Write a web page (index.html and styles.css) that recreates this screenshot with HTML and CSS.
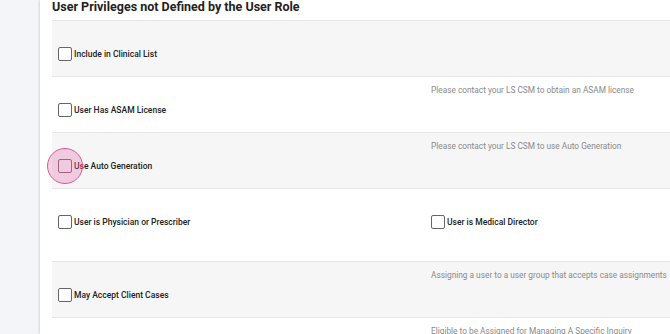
FILE: index.html
```html
<!DOCTYPE html>
<html lang="en">
<head>
    <meta charset="UTF-8">
    <title>User Privileges</title>
    <link rel="stylesheet" href="styles.css">
</head>
<body>
    <div class="sidebar"></div>
    <div class="panel">
        <h2>User Privileges not Defined by the User Role</h2>

        <div class="priv-row shaded">
            <div class="cell">
                <label class="check"><span class="box"></span>Include in Clinical List</label>
            </div>
            <div class="cell"></div>
        </div>

        <div class="priv-row">
            <div class="cell">
                <label class="check"><span class="box"></span>User Has ASAM License</label>
            </div>
            <div class="cell">
                <div class="hint">Please contact your LS CSM to obtain an ASAM license</div>
            </div>
        </div>

        <div class="priv-row shaded">
            <div class="cell">
                <label class="check focused"><span class="ripple"></span><span class="box"></span>Use Auto Generation</label>
            </div>
            <div class="cell">
                <div class="hint">Please contact your LS CSM to use Auto Generation</div>
            </div>
        </div>

        <div class="priv-row tall">
            <div class="cell">
                <label class="check"><span class="box"></span>User is Physician or Prescriber</label>
            </div>
            <div class="cell">
                <label class="check"><span class="box"></span>User is Medical Director</label>
            </div>
        </div>

        <div class="priv-row shaded">
            <div class="cell">
                <label class="check"><span class="box"></span>May Accept Client Cases</label>
            </div>
            <div class="cell">
                <div class="hint">Assigning a user to a user group that accepts case assignments</div>
            </div>
        </div>

        <div class="priv-row">
            <div class="cell"></div>
            <div class="cell">
                <div class="hint">Eligible to be Assigned for Managing A Specific Inquiry</div>
            </div>
        </div>
    </div>
</body>
</html>
```

FILE: styles.css
```css
body {
    margin: 0;
    display: flex;
    height: 334px;
    overflow: hidden;
    font-family: Roboto, "Liberation Sans", sans-serif;
    background-color: #f3f5f9;
}
.sidebar {
    width: 40px;
    flex-shrink: 0;
}
.panel {
    flex: 1;
    background-color: #fff;
    padding-left: 12px;
    box-shadow: -1px 0 2px rgba(0, 0, 0, 0.12);
    overflow: hidden;
}
h2 {
    margin: 0;
    height: 20px;
    line-height: 14px;
    font-size: 12.5px;
    font-weight: 700;
    color: #222;
    white-space: nowrap;
}
.priv-row {
    display: grid;
    grid-template-columns: 373px 1fr;
    height: 56px;
    box-sizing: border-box;
    border-top: 1px solid #e6e6e6;
    padding: 5px 0 0 6px;
}
.priv-row.shaded {
    background-color: #f6f6f6;
}
.priv-row.tall {
    height: 73px;
}
.cell {
    display: flex;
    flex-direction: column;
    padding-top: 20px;
}
.cell .hint {
    margin-top: -20px;
}
.hint {
    height: 16px;
    line-height: 16px;
    margin-bottom: 4px;
    font-size: 8.3px;
    color: #8a8a8a;
    white-space: nowrap;
}
.check {
    position: relative;
    display: flex;
    align-items: center;
    gap: 2px;
    height: 14px;
    margin-top: 1px;
    font-size: 8.5px;
    font-weight: 500;
    color: #222;
    white-space: nowrap;
}
.box {
    width: 14px;
    height: 14px;
    box-sizing: border-box;
    border: 1.5px solid #666;
    border-radius: 2px;
    background-color: #fff;
    flex-shrink: 0;
}
.focused .box {
    background-color: transparent;
    border-color: #8a5a72;
}
.ripple {
    position: absolute;
    left: -11px;
    top: -11px;
    width: 36px;
    height: 36px;
    box-sizing: border-box;
    border-radius: 50%;
    border: 1.5px solid #e0559c;
    background-color: rgba(226, 110, 170, 0.32);
}
```
